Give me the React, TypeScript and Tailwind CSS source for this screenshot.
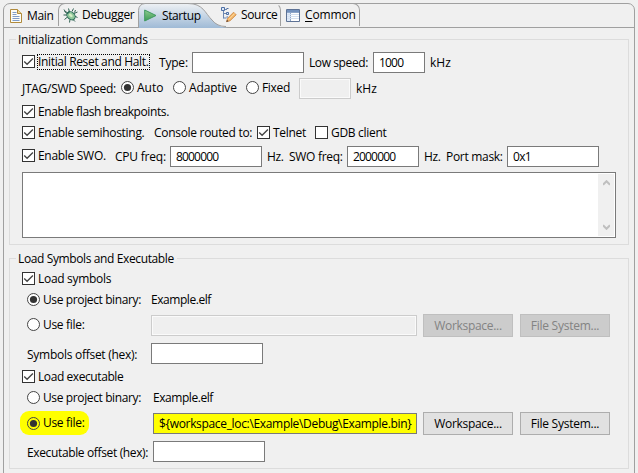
import React from "react";

type TextProps = { children: React.ReactNode; className?: string };

function Label({ children, className = "" }: TextProps) {
  return <span className={`block shrink-0 whitespace-nowrap ${className}`}>{children}</span>;
}

function Check({ children, checked = true, focused = false, className = "" }: TextProps & { checked?: boolean; focused?: boolean }) {
  return (
    <label className={`flex shrink-0 items-center ${className}`}>
      <span className="block h-[13px] w-[13px] shrink-0 border border-[#333] bg-white">
        {checked && (
          <svg viewBox="0 0 11 11" className="block h-[11px] w-[11px]" fill="none" stroke="#444" strokeWidth="1.35">
            <path d="M1.2 5.4 4.1 8.3 9.9 2.5" />
          </svg>
        )}
      </span>
      <span className={`ml-[2px] block h-4 whitespace-nowrap ${focused ? "w-[113px] border border-dotted border-black leading-[14px]" : "px-px leading-[16px]"}`}>
        {children}
      </span>
    </label>
  );
}

function Radio({ children, checked = false, fill = "#fff", className = "" }: TextProps & { checked?: boolean; fill?: string }) {
  return (
    <label className={`flex shrink-0 items-center ${className}`}>
      <svg viewBox="0 0 13 13" className="block h-[13px] w-[13px] shrink-0">
        <circle cx="6.5" cy="6.5" r="6" fill={fill} stroke="#444" />
        {checked && <circle cx="6.5" cy="6.5" r="3.6" fill="#333" />}
      </svg>
      <span className="ml-[3px] block h-4 whitespace-nowrap leading-[16px]">{children}</span>
    </label>
  );
}

function Field({ children, className = "", disabled = false }: { children?: React.ReactNode; className?: string; disabled?: boolean }) {
  return (
    <div
      className={`h-[21px] shrink-0 overflow-hidden whitespace-nowrap border pl-[5px] leading-[19px] ${
        disabled ? "border-[#ccc] bg-[#efefef] shadow-[inset_0_0_0_1px_#fafafa]" : "border-[#7a7a7a]"
      } ${className}`}
    >
      {children}
    </div>
  );
}

function Button({ children, disabled = false, className = "" }: TextProps & { disabled?: boolean }) {
  return (
    <button
      className={`block h-[23px] w-[90px] shrink-0 border text-center leading-[21px] ${
        disabled ? "border-[#bfbfbf] bg-[#ccc] text-[#838383]" : "border-[#adadad] bg-[#e1e1e1] text-black"
      } ${className}`}
    >
      {children}
    </button>
  );
}

function PageIcon() {
  return (
    <svg viewBox="0 0 12 14" className="block h-[14px] w-[12px]">
      <path d="M.5.5h7l4 4v9H.5z" fill="#fdfdf6" stroke="#b08a3c" />
      <path d="M7.5.5v4h4" fill="#f0d88e" stroke="#b08a3c" />
      <path d="M2.5 3.5h4M2.5 5.5h4M2.5 7.5h7M2.5 9.5h7M2.5 11.5h7" stroke="#7f9cc8" />
    </svg>
  );
}

function BugIcon() {
  return (
    <svg viewBox="0 0 15 15" className="block h-[15px] w-[15px]">
      <path
        d="M4.5 4.5 1.5 3.5M4 7H.5M4.5 9 1.5 11.5M7 11.5 6.5 14.5M10 11.5 12 13.5M6.5 4 5.500.5M9 3.5 10.5.5M11 5.5 14.5 4M11.5 8 14.5 9.5M3.5 5.5 1 1.5M11.5 4.5 12.5 2"
        fill="none"
        stroke="#2f5f50"
        strokeWidth="1"
      />
      <ellipse cx="8" cy="7.8" rx="4.6" ry="3.6" transform="rotate(42 8 7.8)" fill="#8fc79b" stroke="#2c6b58" />
      <path d="M4 5.8 6.5 3.5" stroke="#2c6b58" strokeWidth="1.5" />
      <ellipse cx="7.8" cy="7.4" rx="2.2" ry="1.3" transform="rotate(42 7.8 7.4)" fill="#d3edc4" />
    </svg>
  );
}

function PlayIcon() {
  return (
    <svg viewBox="0 0 13 13" className="block h-[13px] w-[13px]">
      <defs>
        <linearGradient id="play" x1="0" y1="0" x2="0" y2="1">
          <stop offset="0" stopColor="#8ccb8e" />
          <stop offset="1" stopColor="#3d9b55" />
        </linearGradient>
      </defs>
      <path d="M.7 1v11L12 6.5z" fill="url(#play)" stroke="#3f9960" strokeLinejoin="round" />
    </svg>
  );
}

function SourceIcon() {
  return (
    <svg viewBox="0 0 16 16" className="block h-4 w-4">
      <path d="M2.5 2v9.5M2.5 6.5h3M2.5 11h3M4 2.5h2" fill="none" stroke="#6c87b0" />
      <path d="M.5.5h3v3h-3zM5.5 1.5h2M5.5 5.5h2v2h-2zM5.5 10h1.5" fill="#dce8f6" stroke="#4d6fa5" />
      <path d="M5.5 14.7 6.6 11.3 12.6 5.2 15.2 7.8 9 13.8z" fill="#f4b566" stroke="#c98645" strokeWidth=".8" />
      <path d="M7.8 12.5 13.7 6.5" stroke="#fbdca6" />
      <path d="M5.3 15 6 12.8 7.5 14.2z" fill="#5c4033" />
    </svg>
  );
}

function TableIcon() {
  return (
    <svg viewBox="0 0 14 13" className="block h-[13px] w-[14px]">
      <path d="M.5.5h13v12H.5z" fill="#fff" stroke="#5d7295" />
      <path d="M1 1h12v2H1z" fill="#7391bd" />
      <path d="M1 3h3.5v9H1z" fill="#dce8f8" />
      <path d="M1 3.5h12M4.5 3v9" stroke="#8da5c8" />
      <path d="M1 5.5h12M1 7.5h12M1 9.5h12" stroke="#d3dfef" />
    </svg>
  );
}

const tabEdge = "h-[23px] shrink-0 border-[#a0a0a0] flex items-center";

function TabBar() {
  return (
    <div className="flex h-6 border-b border-[#a0a0a0]">
      <div className={`${tabEdge} w-[54px] pl-[6px]`}>
        <PageIcon />
        <Label className="ml-[5px] tracking-[-0.3px]">Main</Label>
      </div>
      <div className={`${tabEdge} -mt-px h-6 w-[80px] rounded-tl-[7px] border-l border-t pl-[4px]`}>
        <BugIcon />
        <Label className="ml-[4px] tracking-[-0.3px]">Debugger</Label>
      </div>
      <div className="relative -mt-px flex h-[25px] w-[80px] shrink-0 items-center pl-[6px]">
        <svg viewBox="0 0 94 25" className="absolute left-0 top-0 h-[25px] w-[94px]">
          <defs>
            <linearGradient id="tab" x1="0" y1="0" x2="0" y2="1">
              <stop offset="0" stopColor="#eef1f4" />
              <stop offset="1" stopColor="#9fbad6" />
            </linearGradient>
          </defs>
          <path d="M0 25V7L2 3 6 .5H50C65 .5 67 10 74 17Q80 24 90 25z" fill="url(#tab)" />
          <path d="M.5 25V7.5Q.8 1 7 .5H50C65 .5 67 10 74 17Q79 23.5 88 23.5" fill="none" stroke="#a0a0a0" />
        </svg>
        <span className="relative">
          <PlayIcon />
        </span>
        <Label className="relative ml-[5px] tracking-[-0.4px]">Startup</Label>
      </div>
      <div className={`${tabEdge} -mt-px h-6 w-[63px] rounded-tr-[7px] border-r border-t border-t-transparent pl-[3px]`}>
        <SourceIcon />
        <Label className="ml-[4px] tracking-[-0.35px]">Source</Label>
      </div>
      <div className={`${tabEdge} -mt-px h-6 w-[79px] rounded-tr-[7px] border-r border-t pl-[5px]`}>
        <TableIcon />
        <Label className="ml-[5px] tracking-[-0.15px]">
          <span className="underline underline-offset-2">C</span>ommon
        </Label>
      </div>
    </div>
  );
}

function Group({ title, titleClass, className, children }: { title: string; titleClass: string; className: string; children: React.ReactNode }) {
  return (
    <section className={`ml-[5px] w-[620px] border border-[#dcdcdc] pl-[12px] ${className}`}>
      <h2 className={`-ml-[6px] -mt-[9px] h-[18px] whitespace-nowrap bg-[#f0f0f0] pl-[2px] leading-[18px] ${titleClass}`}>{title}</h2>
      {children}
    </section>
  );
}

export default function App() {
  return (
    <div className="h-[473px] w-[638px] overflow-hidden bg-[#f0f0f0] pl-[3px] pt-[3px] font-['Open_Sans','Liberation_Sans',sans-serif] text-[12px] leading-[16px] tracking-[-0.3px] text-black">
      <main className="h-[480px] w-[632px] rounded-t-[7px] border border-[#a0a0a0]">
        <TabBar />

        <Group title="Initialization Commands" titleClass="w-[134px] tracking-[-0.24px]" className="mt-[11px] h-[206px]">
          <div className="mt-[3px] flex h-[21px] items-center">
            <Check focused className="w-[137px] pb-[2px] tracking-[-0.34px]">Initial Reset and Halt.</Check>
            <Label className="w-[33px] tracking-[-0.2px]">Type:</Label>
            <Field className="w-[112px] bg-white" />
            <Label className="ml-[5px] w-[64px] tracking-[-0.4px]">Low speed:</Label>
            <Field className="w-[52px] bg-white tracking-[-0.8px]">1000</Field>
            <Label className="ml-[5px] tracking-[0px]">kHz</Label>
          </div>

          <div className="mt-[5px] flex h-[21px] items-center">
            <Label className="w-[99px] tracking-[-0.27px]">JTAG/SWD Speed:</Label>
            <Radio checked className="w-[52px] pb-[2px] tracking-[0px]">Auto</Radio>
            <Radio className="w-[73px] pb-[2px] tracking-[-0.15px]">Adaptive</Radio>
            <Radio className="w-[53px] pb-[2px] tracking-[-0.32px]">Fixed</Radio>
            <Field disabled className="w-[52px]" />
            <Label className="ml-[5px] tracking-[0px]">kHz</Label>
          </div>

          <div className="mt-[6px] flex h-[13px] items-center">
            <Check className="tracking-[-0.4px]">Enable flash breakpoints.</Check>
          </div>

          <div className="mt-[8px] flex h-[13px] items-center">
            <Check className="w-[132px] tracking-[-0.3px]">Enable semihosting.</Check>
            <Label className="w-[103px]">Console routed to:</Label>
            <Check className="w-[58px]">Telnet</Check>
            <Check checked={false}>GDB client</Check>
          </div>

          <div className="mt-[7px] flex h-[21px] items-center">
            <Check className="w-[93px] pb-[2px]">Enable SWO.</Check>
            <Label className="w-[55px] tracking-[-0.22px]">CPU freq:</Label>
            <Field className="w-[92px] bg-white tracking-[-0.82px]">8000000</Field>
            <Label className="ml-[5px] w-[22px]">Hz.</Label>
            <Label className="w-[58px]">SWO freq:</Label>
            <Field className="w-[72px] bg-white tracking-[-0.82px]">2000000</Field>
            <Label className="ml-[5px] w-[22px]">Hz.</Label>
            <Label className="w-[61px]">Port mask:</Label>
            <Field className="w-[92px] bg-white tracking-[-0.7px]">0x1</Field>
          </div>

          <div className="mt-[5px] flex h-[66px] w-[594px] justify-end border border-[#7a7a7a] bg-white p-px">
            <div className="flex w-4 flex-col items-center justify-between bg-[#f0f0f0] py-[6px]">
              <svg viewBox="0 0 7 6" className="block h-[6px] w-[7px]" fill="none" stroke="#bfbfbf" strokeWidth="2">
                <path d="M0 4.7 3.5 1.2 7 4.7" />
              </svg>
              <svg viewBox="0 0 7 6" className="block h-[6px] w-[7px]" fill="none" stroke="#bfbfbf" strokeWidth="2">
                <path d="M0 1.3 3.5 4.8 7 1.3" />
              </svg>
            </div>
          </div>
        </Group>

        <Group title="Load Symbols and Executable" titleClass="w-[161px] tracking-[-0.38px]" className="mt-[13px] h-[211px]">
          <div className="mt-[4px] flex h-[13px] items-center">
            <Check className="tracking-[-0.3px]">Load symbols</Check>
          </div>
          <div className="mt-[8px] flex h-[13px] items-center pl-[5px]">
            <Radio checked className="w-[124px] tracking-[-0.38px]">Use project binary:</Radio>
            <Label className="tracking-[-0.44px]">Example.elf</Label>
          </div>
          <div className="mt-[8px] flex h-[23px] items-center pl-[5px]">
            <Radio className="w-[124px] pb-[2px]">Use file:</Radio>
            <Field disabled className="w-[266px]" />
            <Button disabled className="ml-[6px] tracking-[-0.3px]">Workspace...</Button>
            <Button disabled className="ml-[7px] tracking-[-0.26px]">File System...</Button>
          </div>
          <div className="mt-[6px] flex h-[21px] items-center pl-[5px]">
            <Label className="w-[124px] pt-[2px] tracking-[-0.27px]">Symbols offset (hex):</Label>
            <Field className="w-[112px] bg-white" />
          </div>
          <div className="mt-[6px] flex h-[13px] items-center">
            <Check className="tracking-[-0.42px]">Load executable</Check>
          </div>
          <div className="mt-[8px] flex h-[13px] items-center pl-[5px]">
            <Radio className="w-[126px] tracking-[-0.38px]">Use project binary:</Radio>
            <Label className="tracking-[-0.44px]">Example.elf</Label>
          </div>
          <div className="mt-[7px] flex h-[24px] items-center">
            <div className="-ml-[2px] flex h-6 w-[69px] items-center rounded-[9px] bg-[#ff0] pl-[7px]">
              <Radio checked fill="#ff0">Use file:</Radio>
            </div>
            <Field className="ml-[64px] w-[264px] bg-[#ff0] tracking-[-0.33px]">{"${workspace_loc:\\Example\\Debug\\Example.bin}"}</Field>
            <Button className="ml-[6px] tracking-[-0.3px]">Workspace...</Button>
            <Button className="ml-[7px] tracking-[-0.26px]">File System...</Button>
          </div>
          <div className="mt-[6px] flex h-[21px] items-center pl-[5px]">
            <Label className="w-[126px] pt-[2px] tracking-[-0.36px]">Executable offset (hex):</Label>
            <Field className="w-[112px] bg-white" />
          </div>
        </Group>
      </main>
    </div>
  );
}
